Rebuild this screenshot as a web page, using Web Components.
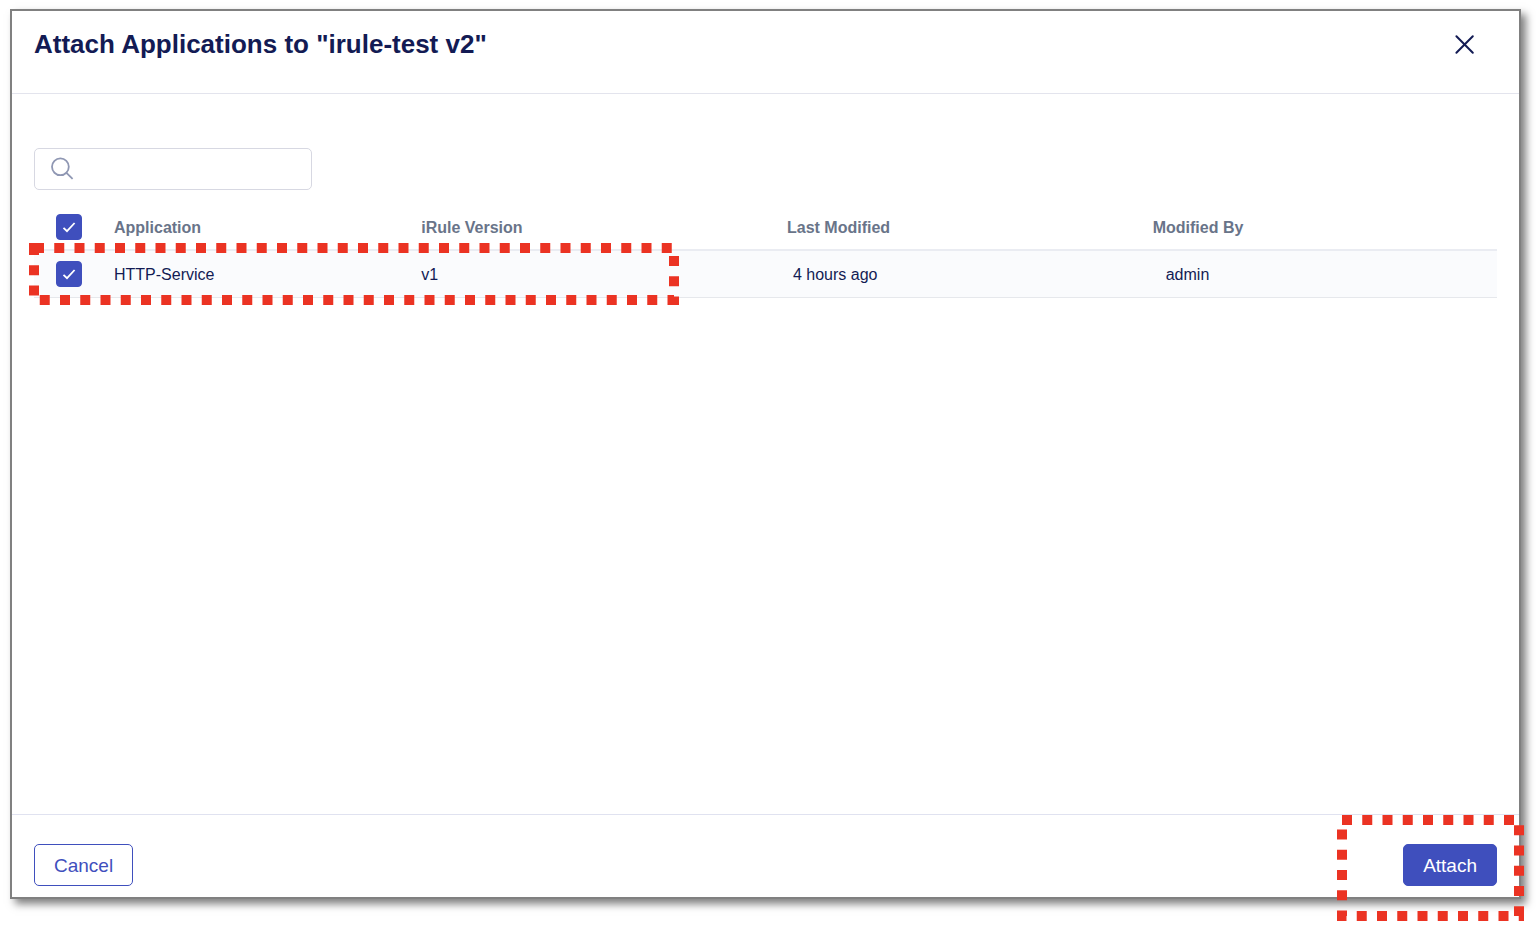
<!DOCTYPE html>
<html lang="en">
<head>
<meta charset="utf-8">
<meta name="viewport" content="width=device-width, initial-scale=1">
<title>Attach Applications</title>
<style>
  html, body { margin: 0; }
  body {
    display: flex;
    box-sizing: border-box;
    min-height: 100vh;
    padding: 9px 15px 29px 10px;
    background: #fff;
    color: #131b54;
    font-family: "Liberation Sans", Arial, sans-serif;
    overflow-x: hidden;
  }
</style>
</head>
<body>
<modal-dialog heading='Attach Applications to "irule-test v2"'>
  <search-box label="Search applications"></search-box>
  <application-table></application-table>
  <action-button slot="cancel">Cancel</action-button>
  <action-button slot="confirm" primary>Attach</action-button>
  <callout-frame slot="confirm-callout"></callout-frame>
</modal-dialog>

<script>
  const attach = (host, html) => {
    const template = document.createElement('template');
    template.innerHTML = html;
    const root = host.attachShadow({ mode: 'open' });
    root.append(template.content.cloneNode(true));
    return root;
  };

  customElements.define('callout-frame', class extends HTMLElement {
    constructor() {
      super();
      attach(this, `
        <style>
          :host { display: block; pointer-events: none; }
          svg { display: block; width: 100%; height: 100%; overflow: visible; }
          rect {
            x: 5px; y: 5px;
            width: calc(100% - 10px); height: calc(100% - 10px);
            fill: none; stroke: #eb3323; stroke-width: 10; stroke-dasharray: 10 10.25;
          }
        </style>
        <svg aria-hidden="true"><rect></rect></svg>`);
    }
  });

  customElements.define('action-button', class extends HTMLElement {
    constructor() {
      super();
      attach(this, `
        <style>
          :host { display: block; }
          button {
            display: block;
            height: 42px;
            padding: 2px 19px 0;
            border: 1px solid #3f4fbd;
            border-radius: 5px;
            background: #fff;
            color: #3f4fbd;
            font: inherit;
            font-size: 19px;
            cursor: pointer;
          }
          :host([primary]) button { background: #3f4fbd; color: #fff; }
        </style>
        <button type="button"><slot></slot></button>`);
    }
  });

  customElements.define('check-box', class extends HTMLElement {
    constructor() {
      super();
      const root = attach(this, `
        <style>
          :host { display: grid; width: 26px; height: 26px; }
          input, svg { grid-area: 1 / 1; width: 26px; height: 26px; margin: 0; }
          input {
            appearance: none;
            border: 1px solid #3f4fbd;
            border-radius: 4px;
            background: #fff;
          }
          input:checked { background: #3f4fbd; }
          svg { pointer-events: none; display: none; }
          input:checked + svg { display: block; }
        </style>
        <input type="checkbox" checked>
        <svg viewBox="0 0 26 26" aria-hidden="true">
          <path d="M7.5 13.8l3.5 3.4 7.6-8.2" fill="none" stroke="#fff" stroke-width="1.8"/>
        </svg>`);
      root.querySelector('input').setAttribute('aria-label', this.getAttribute('label'));
    }
  });

  customElements.define('search-box', class extends HTMLElement {
    constructor() {
      super();
      const root = attach(this, `
        <style>
          :host {
            display: flex;
            align-items: center;
            gap: 8px;
            box-sizing: border-box;
            width: 278px;
            height: 42px;
            padding: 0 15px;
            border: 1px solid #d7d8e2;
            border-radius: 5px;
            background: #fff;
          }
          svg { flex: none; width: 24px; height: 24px; }
          input {
            flex: 1;
            min-width: 0;
            padding: 0;
            border: 0;
            outline: 0;
            background: none;
            color: inherit;
            font: inherit;
          }
        </style>
        <svg viewBox="0 0 24 24" fill="none" stroke="#8f97b3" stroke-width="1.8" aria-hidden="true">
          <circle cx="10.4" cy="9.8" r="8.4"/><path d="M16.2 15.6l6.4 6.2"/>
        </svg>
        <input type="text">`);
      root.querySelector('input').setAttribute('aria-label', this.getAttribute('label'));
    }
  });

  customElements.define('application-table', class extends HTMLElement {
    constructor() {
      super();
      attach(this, `
        <style>
          :host { display: block; position: relative; font-size: 16px; }
          table { width: 100%; table-layout: fixed; border-collapse: separate; border-spacing: 0; }
          .select { width: 80px; }
          .name { width: 21%; }
          .version, .modified { width: 25%; }
          th, td { padding: 2px 0 0; text-align: left; box-sizing: border-box; }
          th:first-child, td:first-child { padding-top: 0; }
          th { height: 47px; border-bottom: 2px solid #eaecf2; color: #697489; }
          td { height: 47px; border-bottom: 1px solid #e6e8ec; background: #fafbfd; }
          check-box { margin-left: 22px; }
          td.when { padding-left: 6px; }
          td.who { padding-left: 13px; }
          callout-frame { position: absolute; left: -5px; bottom: -7px; width: 650px; height: 62px; }
        </style>
        <table>
          <colgroup>
            <col class="select"><col class="name"><col class="version"><col class="modified"><col>
          </colgroup>
          <thead>
            <tr>
              <th><check-box label="Select all applications"></check-box></th>
              <th scope="col">Application</th>
              <th scope="col">iRule Version</th>
              <th scope="col">Last Modified</th>
              <th scope="col">Modified By</th>
            </tr>
          </thead>
          <tbody>
            <tr>
              <td><check-box label="Select HTTP-Service"></check-box></td>
              <td>HTTP-Service</td>
              <td>v1</td>
              <td class="when">4 hours ago</td>
              <td class="who">admin</td>
            </tr>
          </tbody>
        </table>
        <callout-frame></callout-frame>`);
    }
  });

  customElements.define('modal-dialog', class extends HTMLElement {
    constructor() {
      super();
      const root = attach(this, `
        <style>
          :host {
            display: flex;
            flex: 1;
            flex-direction: column;
            min-width: 0;
            border: 2px solid #808080;
            background: #fff;
            box-shadow: 5px 5px 8px rgba(0, 0, 0, 0.5);
          }
          header {
            display: flex;
            align-items: flex-start;
            justify-content: space-between;
            box-sizing: border-box;
            height: 83px;
            padding: 17px 42px 0 22px;
            border-bottom: 1px solid #e3e4ed;
          }
          h1 { margin: 0; font-size: 26px; line-height: 32px; }
          .close {
            width: 24px;
            height: 32px;
            padding: 0;
            border: 0;
            background: none;
            color: inherit;
            cursor: pointer;
          }
          .close svg { display: block; width: 24px; height: 24px; }
          main {
            display: flex;
            flex: 1;
            flex-direction: column;
            gap: 14px;
            padding: 54px 22px 24px;
          }
          footer {
            position: relative;
            display: flex;
            justify-content: space-between;
            padding: 29px 22px 11px;
            border-top: 1px solid #e0e2f0;
          }
          ::slotted(callout-frame) {
            position: absolute;
            top: 0;
            right: -5px;
            width: 187px;
            height: 106px;
          }
        </style>
        <header>
          <h1></h1>
          <button class="close" type="button" aria-label="Close">
            <svg viewBox="0 0 24 24" fill="none" stroke="currentColor" stroke-width="2" stroke-linecap="round" aria-hidden="true">
              <path d="M3.4 4.2l16.4 16.6M19.8 4.2L3.4 20.8"/>
            </svg>
          </button>
        </header>
        <main><slot></slot></main>
        <footer>
          <slot name="cancel"></slot>
          <slot name="confirm"></slot>
          <slot name="confirm-callout"></slot>
        </footer>`);
      root.querySelector('h1').textContent = this.getAttribute('heading');
    }
  });
</script>
</body>
</html>
